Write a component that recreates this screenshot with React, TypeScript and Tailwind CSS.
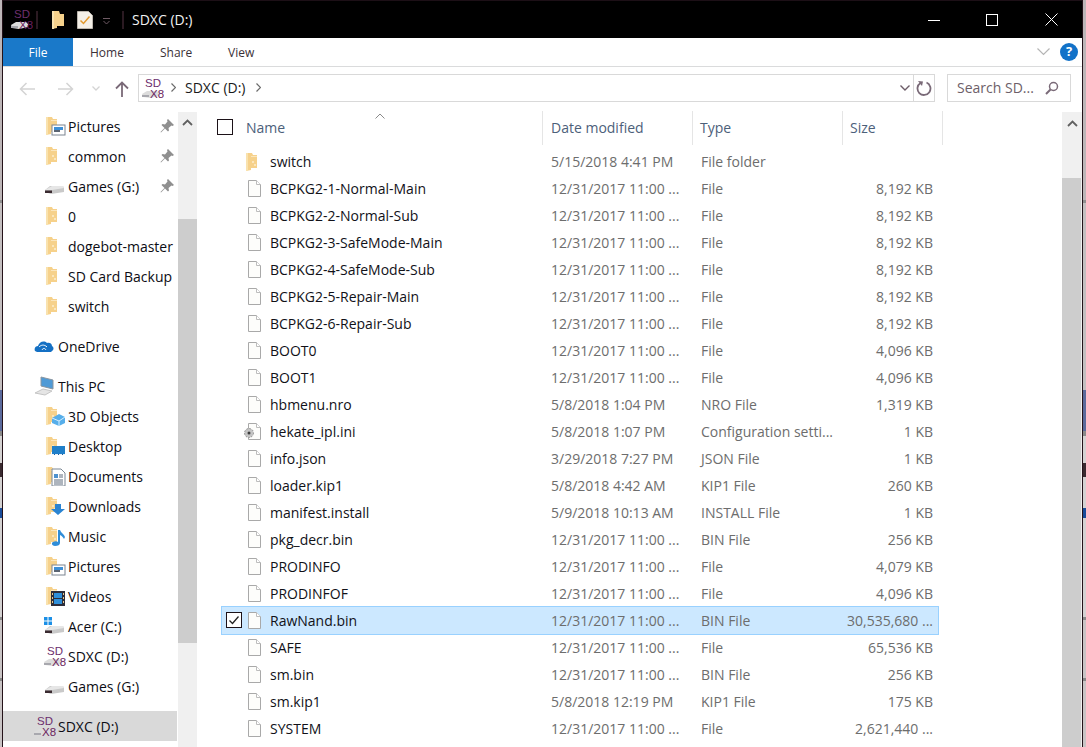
import React from "react";

const FONT = "font-['Open_Sans','Noto_Sans',sans-serif]";

function Folder({ overlay }: { overlay?: React.ReactNode }) {
  return (
    <svg width="22" height="20" viewBox="0 0 22 20" className="block shrink-0">
      <path d="M2 1h6l1 2h4v13H7v2l-5 1z" fill="#f6d18b" />
      <path d="M2 1h2v18H2z" fill="#f9e2ae" />
      <path d="M7 4h6v1H7zM8 9h2v2H8zM10 12h2v2h-2z" fill="#fbe6bc" />
      {overlay}
    </svg>
  );
}

const ovPictures = (
  <g>
    <rect x="8" y="9" width="13" height="10" fill="#fff" stroke="#7a8490" />
    <rect x="10" y="11" width="9" height="3" fill="#3d8fd6" />
    <rect x="10" y="14" width="6" height="2" fill="#5a6472" />
  </g>
);
const ov3D = (
  <g>
    <path d="M8 12l7-4 6 3v6l-6 3-7-3z" fill="#56aeea" />
    <path d="M8 12l7 3 6-4M15 15v5" stroke="#d7efff" fill="none" />
  </g>
);
const ovDesktop = (
  <g>
    <rect x="8" y="10" width="13" height="8" fill="#1f7fc9" />
    <path d="M8 18h13v1H8z" fill="#eef4fa" />
    <path d="M10 18h1v1h-1zM14 18h1v1h-1zM18 18h1v1h-1z" fill="#1f5f9c" />
  </g>
);
const ovDocs = (
  <g>
    <path d="M8 3h9l4 4v13H8z" fill="#fff" stroke="#7b8794" />
    <path d="M10 8h4v4h-4z" fill="#4e92cf" />
    <path d="M15 9h4M15 11h4M10 14h9M10 16h9M10 18h9" stroke="#5c6b7d" />
  </g>
);
const ovDown = <path d="M11 8h6v5h4l-7 6-7-6h4z" fill="#2a84d2" />;
const ovMusic = (
  <path d="M14 4h2c1 3 4 4 5 7l-1 2c-1-2-2-3-4-4v8c0 2-2 3-5 3s-4-3-2-4 4-1 5 0z" fill="#2f8dd8" />
);
const ovVideos = (
  <g>
    <rect x="7" y="5" width="14" height="15" fill="#2d2d3a" />
    <rect x="10" y="7" width="8" height="5" fill="#2f8fd9" />
    <rect x="10" y="13" width="8" height="5" fill="#2f8fd9" />
    <path d="M8 7h1v2H8zM8 11h1v2H8zM8 15h1v2H8zM19 7h1v2h-1zM19 11h1v2h-1zM19 15h1v2h-1z" fill="#e8c98e" />
  </g>
);

function Drive({ win }: { win?: boolean }) {
  return (
    <svg width="21" height="20" viewBox="0 0 21 20" className="block shrink-0">
      {win && <path d="M0 1h3.500v3.500H0zM4.500 1H8v3.500H4.500zM0 5.500h3.500V9H0zM4.500 5.500H8V9H4.500z" fill="#1b8fe6" />}
      <path d="M1 14l5-4h13l1 2v4l-13 2-6-2z" fill="#c9c9c9" />
      <path d="M8 10h11l1 2-12 2-7 0z" fill="#e6e6e6" />
      <path d="M1 14.500h7v2.500H1z" fill="#3a2a30" />
    </svg>
  );
}

function SdIcon() {
  return (
    <svg width="22" height="22" viewBox="0 0 22 22" className="block shrink-0">
      <path d="M0 17l5-3h10l2 2v3l-9 2-7-1z" fill="#dcdcdc" />
      <path d="M0 18h7v2H0z" fill="#a8a8ae" />
      <text x="3" y="10" fontSize="11.5" fill="#6d2f6d" fontFamily="Liberation Sans, sans-serif">SD</text>
      <text x="8" y="20.500" fontSize="11.5" fill="#6b1f5e" fontFamily="Liberation Sans, sans-serif">X8</text>
    </svg>
  );
}

function Cloud() {
  return (
    <svg width="20" height="14" viewBox="0 0 20 14" className="block shrink-0">
      <path d="M1 12c-1-2 0-5 3-5 1-4 6-6 9-3 3-1 5 1 5 3 2 1 2 4 0 5l-1 1H3z" fill="#1470c4" />
      <path d="M5 8c2-2 5-3 8 0M8 11c1-2 3-2 4 0" stroke="#fff" fill="none" />
    </svg>
  );
}

function Pc() {
  return (
    <svg width="21" height="20" viewBox="0 0 21 20" className="block shrink-0">
      <path d="M7 1l12 3v9L7 10z" fill="#4f9ad6" stroke="#8a95a0" />
      <path d="M1 17l8-4 9 2-7 4z" fill="#e5e5e5" stroke="#c5c5c5" />
    </svg>
  );
}

function Pin() {
  return (
    <svg width="14" height="14" viewBox="0 0 14 14" className="block shrink-0">
      <path d="M8 0l6 6-1.500 1-1-.5L8.500 9l.5 2.500-1 1L5 9.500 1 13.500 0.500 13l4-4L1.500 6l1-1L5 5.500 7.500 2.500 7 1z" fill="#8f8f8f" />
    </svg>
  );
}

function FileIcon({ gear }: { gear?: boolean }) {
  return (
    <svg width="20" height="19" viewBox="0 0 20 19" className="block shrink-0">
      <path d="M4.500 1.500h8l4 4v12h-12z" fill="#fdfdfb" stroke="#a9a9a9" />
      <path d="M12.500 1.500v4h4" fill="#fff" stroke="#bdbdbd" />
      {gear && (
        <g>
          <circle cx="5" cy="11" r="4.500" fill="#c4c4c4" />
          <circle cx="5" cy="11" r="4.500" fill="none" stroke="#8c8c8c" strokeDasharray="1.500 1.500" />
          <circle cx="5" cy="11" r="1.500" fill="#3d3d3d" />
        </g>
      )}
    </svg>
  );
}

function NavRow({
  icon,
  label,
  top,
  pin,
  selected,
}: {
  icon: React.ReactNode;
  label: string;
  top?: boolean;
  pin?: boolean;
  selected?: boolean;
}) {
  return (
    <div
      className={`relative flex h-[30px] w-[174px] items-center overflow-hidden whitespace-nowrap text-[14px] text-[#0c0c14] ${
        top ? "pl-[31px]" : "pl-[41px]"
      } ${selected ? "bg-[#d9d9d9]" : ""}`}
    >
      <div className="w-[24px] shrink-0">{icon}</div>
      <span className="flex-1">{label}</span>
      {pin && (
        <span className="absolute left-[157px] top-[8px]">
          <Pin />
        </span>
      )}
    </div>
  );
}

type Row = [string, string, string, string, boolean?, boolean?];
const FILE = "File";
const D = "12/31/2017 11:00 ...";
const rows: Row[] = [
  ["switch", "5/15/2018 4:41 PM", "File folder", ""],
  ["BCPKG2-1-Normal-Main", D, FILE, "8,192 KB"],
  ["BCPKG2-2-Normal-Sub", D, FILE, "8,192 KB"],
  ["BCPKG2-3-SafeMode-Main", D, FILE, "8,192 KB"],
  ["BCPKG2-4-SafeMode-Sub", D, FILE, "8,192 KB"],
  ["BCPKG2-5-Repair-Main", D, FILE, "8,192 KB"],
  ["BCPKG2-6-Repair-Sub", D, FILE, "8,192 KB"],
  ["BOOT0", D, FILE, "4,096 KB"],
  ["BOOT1", D, FILE, "4,096 KB"],
  ["hbmenu.nro", "5/8/2018 1:04 PM", "NRO File", "1,319 KB"],
  ["hekate_ipl.ini", "5/8/2018 1:07 PM", "Configuration setti...", "1 KB", true],
  ["info.json", "3/29/2018 7:27 PM", "JSON File", "1 KB"],
  ["loader.kip1", "5/8/2018 4:42 AM", "KIP1 File", "260 KB"],
  ["manifest.install", "5/9/2018 10:13 AM", "INSTALL File", "1 KB"],
  ["pkg_decr.bin", D, "BIN File", "256 KB"],
  ["PRODINFO", D, FILE, "4,079 KB"],
  ["PRODINFOF", D, FILE, "4,096 KB"],
  ["RawNand.bin", D, "BIN File", "30,535,680 ...", false, true],
  ["SAFE", D, FILE, "65,536 KB"],
  ["sm.bin", D, "BIN File", "256 KB"],
  ["sm.kip1", "5/8/2018 12:19 PM", "KIP1 File", "175 KB"],
  ["SYSTEM", D, FILE, "2,621,440 ..."],
];

function Checkbox({ checked }: { checked?: boolean }) {
  return (
    <div className="flex h-[16px] w-[16px] items-center justify-center border border-[#1c1218] bg-white">
      {checked && (
        <svg width="12" height="12" viewBox="0 0 12 12">
          <path d="M1.500 6.500L4.500 9.500 10.500 2.500" stroke="#222" strokeWidth="1.300" fill="none" />
        </svg>
      )}
    </div>
  );
}

function HeaderCell({ label, w }: { label: string; w: string }) {
  return (
    <div className={`flex h-[34px] items-center border-r border-[#e5e5e5] pb-[2px] text-[14px] text-[#4c607a] ${w}`}>
      {label}
    </div>
  );
}

function DesktopEdge() {
  return (
    <div className="flex h-full w-full flex-col bg-[#c9c4c5]">
      <div className="h-[200px] bg-[#bdb6b8]" />
      <div className="h-[3px] bg-[#8f8f8f]" />
      <div className="h-[187px] bg-[#c4bfc0]" />
      <div className="h-[41px] bg-[#5b6a9c]" />
      <div className="h-[5px] bg-[#8a8a8a]" />
      <div className="h-[27px] bg-[#d4d2d2]" />
      <div className="h-[14px] bg-[#3a2a30]" />
      <div className="h-[31px] bg-[#d4d2d2]" />
      <div className="h-[10px] bg-[#1a4c9a]" />
      <div className="h-[99px] bg-[#d4d2d2]" />
      <div className="h-[3px] bg-[#8a8a8a]" />
      <div className="h-[58px] bg-[#c9c4c5]" />
      <div className="h-[3px] bg-[#888888]" />
    </div>
  );
}

export default function App() {
  return (
    <div className={`flex h-[747px] w-[1086px] overflow-hidden bg-[#b9b4b6] ${FONT}`}>
      <div className="h-full w-[2px] shrink-0">
        <DesktopEdge />
      </div>
      <div className="h-full w-px shrink-0 bg-[#241219]" />
      <div className="flex h-full w-[1079px] shrink-0 flex-col bg-white">
        {/* title bar */}
        <div className="relative flex h-[38px] shrink-0 items-center border-t border-[#1c0f16] bg-black text-white">
          <div className="ml-[8px] mt-[-1px]">
            <SdIcon />
          </div>
          <div className="ml-[3px] h-[18px] w-[2px] bg-[#2b1a22]" />
          <div className="ml-[13px]">
            <svg width="14" height="19" viewBox="0 0 14 19" className="block">
              <path d="M1 1h7l1 3h4v12H6v2l-5 1z" fill="#f6d18b" />
              <path d="M1 1h2v18H1z" fill="#f9e2ae" />
            </svg>
          </div>
          <div className="ml-[12px]">
            <svg width="16" height="18" viewBox="0 0 16 18" className="block">
              <path d="M.5.500h11l4 4v13H.5z" fill="#f4efe7" stroke="#bcb6ae" />
              <path d="M3.500 9.500l3 3 6-7" stroke="#e2992e" strokeWidth="1.500" fill="none" />
            </svg>
          </div>
          <div className="ml-[10px] mt-[4px]">
            <svg width="7" height="7" viewBox="0 0 7 7" className="block">
              <path d="M0 .5h7M.5 3l3 3 3-3" stroke="#6f5a64" fill="none" />
            </svg>
          </div>
          <div className="ml-[12px] h-[18px] w-[2px] bg-[#2b1a22]" />
          <span className="ml-[8px] text-[14px] text-[#f2f2f2]">SDXC (D:)</span>
          <div className="ml-auto flex items-center">
            <svg width="12" height="12" viewBox="0 0 12 12" className="block">
              <path d="M0 6.500h12" stroke="#fff" />
            </svg>
            <svg width="12" height="12" viewBox="0 0 12 12" className="ml-[46px] block">
              <rect x=".5" y=".5" width="11" height="11" fill="none" stroke="#fff" />
            </svg>
            <svg width="13" height="13" viewBox="0 0 13 13" className="ml-[47px] mr-[24px] block">
              <path d="M.5.500l12 12M12.500.500l-12 12" stroke="#fff" />
            </svg>
          </div>
        </div>
        {/* ribbon tabs */}
        <div className="flex h-[29px] shrink-0 items-stretch border-b border-[#dadbdc] text-[12px] text-[#3a3138]">
          <div className="flex w-[70px] items-center justify-center bg-[#1a79c9] pt-[2px] text-white">File</div>
          <div className="ml-[17px] flex w-[35px] items-center pt-[2px]">Home</div>
          <div className="ml-[35px] flex w-[33px] items-center pt-[2px]">Share</div>
          <div className="ml-[35px] flex w-[30px] items-center pt-[2px]">View</div>
          <div className="ml-auto mr-[4px] flex items-center gap-[10px]">
            <svg width="13" height="8" viewBox="0 0 13 8" className="block">
              <path d="M.5.500l6 6 6-6" stroke="#b5b5b5" strokeWidth="1.200" fill="none" />
            </svg>
            <div className="flex h-[18px] w-[18px] items-center justify-center rounded-full bg-[#1272c8] text-[13px] font-bold text-white">
              ?
            </div>
          </div>
        </div>
        {/* address row */}
        <div className="flex h-[44px] shrink-0 items-center pb-[2px] text-[14px]">
          <svg width="16" height="14" viewBox="0 0 16 14" className="ml-[16px] mt-[1px] block">
            <path d="M16 7H1.500M7.500 1l-6 6 6 6" stroke="#d4d4d4" strokeWidth="1.500" fill="none" />
          </svg>
          <svg width="16" height="14" viewBox="0 0 16 14" className="ml-[23px] mt-[1px] block">
            <path d="M0 7h14.500M8.500 1l6 6-6 6" stroke="#d4d4d4" strokeWidth="1.500" fill="none" />
          </svg>
          <svg width="8" height="5" viewBox="0 0 8 5" className="ml-[18px] mt-[1px] block">
            <path d="M.5.500L4 4 7.500.5" stroke="#d4d4d4" strokeWidth="1.300" fill="none" />
          </svg>
          <svg width="14" height="16" viewBox="0 0 14 16" className="ml-[15px] mt-[2px] block">
            <path d="M7 16V1.500M1 7.500l6-6 6 6" stroke="#7a6a78" strokeWidth="1.800" fill="none" />
          </svg>
          <div className="ml-[9px] mt-[-1px] flex h-[28px] w-[797px] items-center border border-[#d9d9d9]">
            <div className="ml-[3px]">
              <SdIcon />
            </div>
            <svg width="5" height="9" viewBox="0 0 5 9" className="ml-[7px] block">
              <path d="M.5.500l4 4-4 4" stroke="#6b6b6b" strokeWidth="1.200" fill="none" />
            </svg>
            <span className="ml-[9px] text-[14px] text-[#1a1a1a]">SDXC (D:)</span>
            <svg width="5" height="9" viewBox="0 0 5 9" className="ml-[11px] block">
              <path d="M.5.500l4 4-4 4" stroke="#6b6b6b" strokeWidth="1.200" fill="none" />
            </svg>
            <div className="ml-auto flex h-full items-center">
              <svg width="10" height="6" viewBox="0 0 10 6" className="mr-[3px] block">
                <path d="M.5.500L5 5 9.500.5" stroke="#6d5c68" strokeWidth="1.400" fill="none" />
              </svg>
              <div className="flex h-full w-[21px] items-center justify-center border-l border-[#d9d9d9]">
                <svg width="16" height="16" viewBox="0 0 16 16" className="block">
                  <path d="M4.500 3a6.500 6.500 0 1 0 6 -.5" stroke="#7a6a78" strokeWidth="1.800" fill="none" />
                  <path d="M2 1l5 .5-1 4.500z" fill="#7a6a78" />
                </svg>
              </div>
            </div>
          </div>
          <div className="ml-[12px] mt-[-1px] flex h-[28px] w-[124px] items-center border border-[#d9d9d9] pl-[9px] text-[14px] text-[#6d6068]">
            <span>Search SD...</span>
            <svg width="14" height="14" viewBox="0 0 14 14" className="ml-auto mr-[11px] block">
              <circle cx="8.500" cy="5.500" r="4" stroke="#7a6a78" strokeWidth="1.500" fill="none" />
              <path d="M5.500 8.500L1 13" stroke="#7a6a78" strokeWidth="2" />
            </svg>
          </div>
        </div>
        {/* main */}
        <div className="flex min-h-0 flex-1">
          {/* nav */}
          <div className="w-[175px] shrink-0 overflow-hidden">
            <NavRow icon={<Folder overlay={ovPictures} />} label="Pictures" pin />
            <NavRow icon={<Folder />} label="common" pin />
            <NavRow icon={<Drive />} label="Games (G:)" pin />
            <NavRow icon={<Folder />} label="0" />
            <NavRow icon={<Folder />} label="dogebot-master" />
            <NavRow icon={<Folder />} label="SD Card Backup" />
            <NavRow icon={<Folder />} label="switch" />
            <div className="mt-[10px]">
              <NavRow top icon={<Cloud />} label="OneDrive" />
            </div>
            <div className="mt-[10px]">
              <NavRow top icon={<Pc />} label="This PC" />
            </div>
            <NavRow icon={<Folder overlay={ov3D} />} label="3D Objects" />
            <NavRow icon={<Folder overlay={ovDesktop} />} label="Desktop" />
            <NavRow icon={<Folder overlay={ovDocs} />} label="Documents" />
            <NavRow icon={<Folder overlay={ovDown} />} label="Downloads" />
            <NavRow icon={<Folder overlay={ovMusic} />} label="Music" />
            <NavRow icon={<Folder overlay={ovPictures} />} label="Pictures" />
            <NavRow icon={<Folder overlay={ovVideos} />} label="Videos" />
            <NavRow icon={<Drive win />} label="Acer (C:)" />
            <NavRow icon={<SdIcon />} label="SDXC (D:)" />
            <NavRow icon={<Drive />} label="Games (G:)" />
            <div className="mt-[10px]">
              <NavRow top selected icon={<SdIcon />} label="SDXC (D:)" />
            </div>
          </div>
          {/* nav scrollbar */}
          <div className="mt-px flex w-[19px] shrink-0 flex-col bg-[#f0f0f0]">
            <div className="flex h-[107px] justify-center pt-[7px]">
              <svg width="11" height="7" viewBox="0 0 11 7" className="block">
                <path d="M1 6l4.500-4.500L10 6" stroke="#606060" strokeWidth="1.800" fill="none" />
              </svg>
            </div>
            <div className="h-[424px] bg-[#cdcdcd]" />
          </div>
          {/* list */}
          <div className="w-[865px] shrink-0 pl-[17px]">
            <div className="relative flex h-[37px] items-start">
              <div className="flex h-[34px] w-[329px] items-center border-r border-[#e5e5e5] pb-[2px] pl-[3px] text-[14px] text-[#4c607a]">
                <Checkbox />
                <span className="ml-[13px]">Name</span>
              </div>
              <svg width="10" height="6" viewBox="0 0 10 6" className="absolute left-[161px] top-[2px] block">
                <path d="M.5 5.500L5 1l4.500 4.500" stroke="#8a8a8a" fill="none" />
              </svg>
              <HeaderCell label="Date modified" w="w-[150px] pl-[8px]" />
              <HeaderCell label="Type" w="w-[150px] pl-[7px]" />
              <HeaderCell label="Size" w="w-[100px] pl-[7px]" />
            </div>
            <div className="ml-[8px] w-[716px]">
              {rows.map(([name, date, type, size, gear, sel]) => (
                <div
                  key={name}
                  className={`relative flex h-[27px] items-center whitespace-nowrap text-[14px] text-[#6d6d6d] ${
                    sel ? "bg-[#cce8ff] outline outline-1 outline-[#99d1ff]" : ""
                  }`}
                >
                  {sel && (
                    <div className="absolute left-[4px] top-[5px]">
                      <Checkbox checked />
                    </div>
                  )}
                  <div className="ml-[22px] w-[20px] shrink-0">
                    {name === "switch" ? <Folder /> : <FileIcon gear={gear} />}
                  </div>
                  <span className="ml-[6px] w-[281px] text-[#111118]">{name}</span>
                  <span className="w-[150px]">{date}</span>
                  <span className="w-[120px]">{type}</span>
                  <span className="w-[112px] text-right">{size}</span>
                </div>
              ))}
            </div>
          </div>
          {/* list scrollbar */}
          <div className="mt-px flex w-[20px] shrink-0 flex-col bg-[#f0f0f0]">
            <div className="flex h-[66px] shrink-0 justify-center pt-[8px]">
              <svg width="11" height="7" viewBox="0 0 11 7" className="block">
                <path d="M1 6l4.500-4.500L10 6" stroke="#606060" strokeWidth="1.800" fill="none" />
              </svg>
            </div>
            <div className="w-[19px] flex-1 bg-[#cdcdcd]" />
          </div>
        </div>
      </div>
      <div className="h-full w-px shrink-0 bg-[#241219]" />
      <div className="h-full flex-1">
        <DesktopEdge />
      </div>
    </div>
  );
}
